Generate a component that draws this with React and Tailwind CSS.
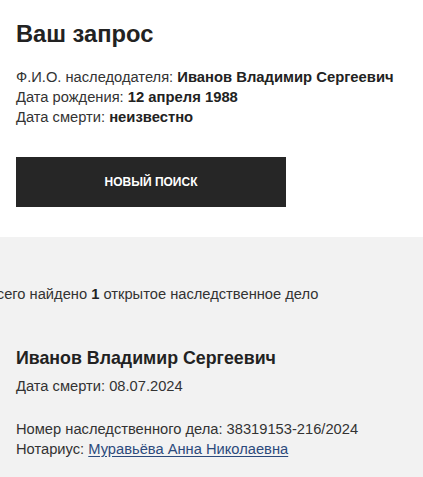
import React from "react";

const App = () => {
  return (
    <div className="min-h-[477px] bg-[#f2f2f2] text-[#2a2a2a]" style={{ fontFamily: '"Liberation Sans", Arial, sans-serif' }}>
      {/* Request summary */}
      <div className="bg-white px-4 pt-[20px] pb-[30px]">
        <h1 className="text-[23.7px] font-bold leading-[28px] text-[#222]">Ваш запрос</h1>
        <div className="mt-[19px] text-[14.7px] leading-[20px] text-[#333]">
          <p>
            Ф.И.О. наследодателя: <b className="text-[14.8px] text-[#222]">Иванов Владимир Сергеевич</b>
          </p>
          <p>
            Дата рождения: <b className="text-[14.8px] text-[#222]">12 апреля 1988</b>
          </p>
          <p>
            Дата смерти: <b className="text-[14.8px] text-[#222]">неизвестно</b>
          </p>
        </div>
        <button className="mt-[30px] flex h-[50px] w-[270px] items-center justify-center bg-[#262626] text-[12px] font-bold uppercase text-white">
          Новый поиск
        </button>
      </div>

      {/* Results */}
      <div className="pt-[47px] pb-6">
        <p className="-ml-[13px] text-[14.7px] leading-[20px] text-[#333]">
          Всего найдено <b className="text-[#222]">1</b> открытое наследственное дело
        </p>
        <div className="mt-[43px] px-4">
          <h2 className="text-[17.8px] font-bold leading-[22px] text-[#222]">Иванов Владимир Сергеевич</h2>
          <p className="mt-[7px] text-[14.7px] leading-[20px] text-[#333]">Дата смерти: 08.07.2024</p>
          <div className="mt-[23px] text-[14.7px] leading-[20px] text-[#333]">
            <p>Номер наследственного дела: 38319153-216/2024</p>
            <p>
              Нотариус:{" "}
              <a href="#" className="text-[#2c4a7c] underline underline-offset-2">
                Муравьёва Анна Николаевна
              </a>
            </p>
          </div>
        </div>
      </div>
    </div>
  );
};

export default App;
